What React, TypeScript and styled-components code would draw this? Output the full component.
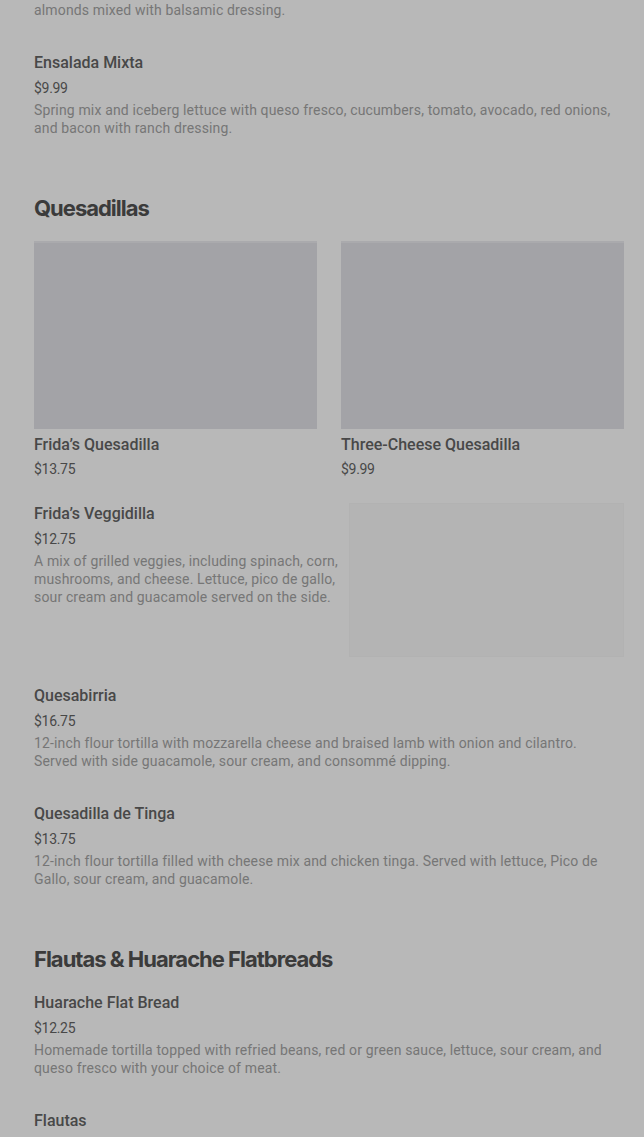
import React from "react";
import styled, { createGlobalStyle } from "styled-components";

const Global = createGlobalStyle`
  html, body { margin: 0; padding: 0; background: #b8b8b8; }
  body { font-family: Roboto, "Liberation Sans", sans-serif; -webkit-font-smoothing: antialiased; }
  * { box-sizing: border-box; }
`;

const Page = styled.main`
  padding: 1px 20px 0 34px;
  background: #b8b8b8;
  height: 1137px;
  overflow: hidden;
`;

const Section = styled.section`
  display: flex;
  flex-direction: column;
  margin-bottom: 57px;
`;

const Heading = styled.h2`
  margin: 0 0 19px;
  font-family: Inter, Roboto, sans-serif;
  font-size: 22px;
  line-height: 28px;
  font-weight: 700;
  letter-spacing: -1px;
  color: #3b3b3b;
`;

const List = styled.div`
  display: flex;
  flex-direction: column;
  gap: 33px;
`;

const Item = styled.article<{ $withImage?: boolean }>`
  display: grid;
  grid-template-columns: ${(p) => (p.$withImage ? "1fr 275px" : "1fr")};
  column-gap: 8px;
  margin-bottom: ${(p) => (p.$withImage ? "-5px" : "0")};
`;

const Info = styled.div`
  display: flex;
  flex-direction: column;
`;

const Title = styled.h3`
  margin: 0 0 5px;
  font-size: 16px;
  line-height: 21px;
  font-weight: 500;
  color: #484848;
`;

const Price = styled.div`
  font-size: 14px;
  line-height: 20px;
  color: #484848;
  letter-spacing: -0.3px;
`;

const Desc = styled.p<{ $lead?: boolean }>`
  margin: ${(p) => (p.$lead ? "0" : "3px 0 0")};
  max-width: 580px;
  font-size: 14px;
  line-height: 18px;
  color: #767676;
  letter-spacing: 0.15px;
`;

const Thumb = styled.div`
  width: 275px;
  height: 154px;
  background: #b4b4b4;
  border: 1px solid #b2b2b2;
`;

const CardGrid = styled.div`
  display: grid;
  grid-template-columns: 1fr 1fr;
  column-gap: 24px;
  margin-bottom: 24px;
`;

const Card = styled.article`
  display: flex;
  flex-direction: column;
`;

const CardImage = styled.div`
  height: 188px;
  background: #a3a3a7;
  border-top: 2px solid #aaaaad;
  margin-bottom: 5px;
`;

const CardTitle = styled(Title)`
  margin-bottom: 4px;
`;

type MenuItem = { name: string; price: string; desc?: string; image?: boolean };

const Row = ({ item }: { item: MenuItem }) => (
  <Item $withImage={item.image}>
    <Info>
      <Title>{item.name}</Title>
      <Price>{item.price}</Price>
      {item.desc && <Desc>{item.desc}</Desc>}
    </Info>
    {item.image && <Thumb />}
  </Item>
);

const salad: MenuItem = {
  name: "Ensalada Mixta",
  price: "$9.99",
  desc: "Spring mix and iceberg lettuce with queso fresco, cucumbers, tomato, avocado, red onions, and bacon with ranch dressing.",
};

const quesadillas: MenuItem[] = [
  {
    name: "Frida’s Veggidilla",
    price: "$12.75",
    desc: "A mix of grilled veggies, including spinach, corn, mushrooms, and cheese. Lettuce, pico de gallo, sour cream and guacamole served on the side.",
    image: true,
  },
  {
    name: "Quesabirria",
    price: "$16.75",
    desc: "12-inch flour tortilla with mozzarella cheese and braised lamb with onion and cilantro. Served with side guacamole, sour cream, and consommé dipping.",
  },
  {
    name: "Quesadilla de Tinga",
    price: "$13.75",
    desc: "12-inch flour tortilla filled with cheese mix and chicken tinga. Served with lettuce, Pico de Gallo, sour cream, and guacamole.",
  },
];

const flautas: MenuItem[] = [
  {
    name: "Huarache Flat Bread",
    price: "$12.25",
    desc: "Homemade tortilla topped with refried beans, red or green sauce, lettuce, sour cream, and queso fresco with your choice of meat.",
  },
  {
    name: "Flautas",
    price: "$13.75",
    desc: "Four crispy rolled tortillas filled with your choice of meat, topped with lettuce, sour cream and queso fresco.",
  },
];

export default function App() {
  return (
    <>
      <Global />
      <Page>
        <Section>
          <List>
            <Desc $lead>almonds mixed with balsamic dressing.</Desc>
            <Row item={salad} />
          </List>
        </Section>
        <Section>
          <Heading>Quesadillas</Heading>
          <CardGrid>
            <Card>
              <CardImage />
              <CardTitle>Frida’s Quesadilla</CardTitle>
              <Price>$13.75</Price>
            </Card>
            <Card>
              <CardImage />
              <CardTitle>Three-Cheese Quesadilla</CardTitle>
              <Price>$9.99</Price>
            </Card>
          </CardGrid>
          <List>
            {quesadillas.map((q) => (
              <Row key={q.name} item={q} />
            ))}
          </List>
        </Section>
        <Section>
          <Heading>Flautas &amp; Huarache Flatbreads</Heading>
          <List>
            {flautas.map((q) => (
              <Row key={q.name} item={q} />
            ))}
          </List>
        </Section>
      </Page>
    </>
  );
}
